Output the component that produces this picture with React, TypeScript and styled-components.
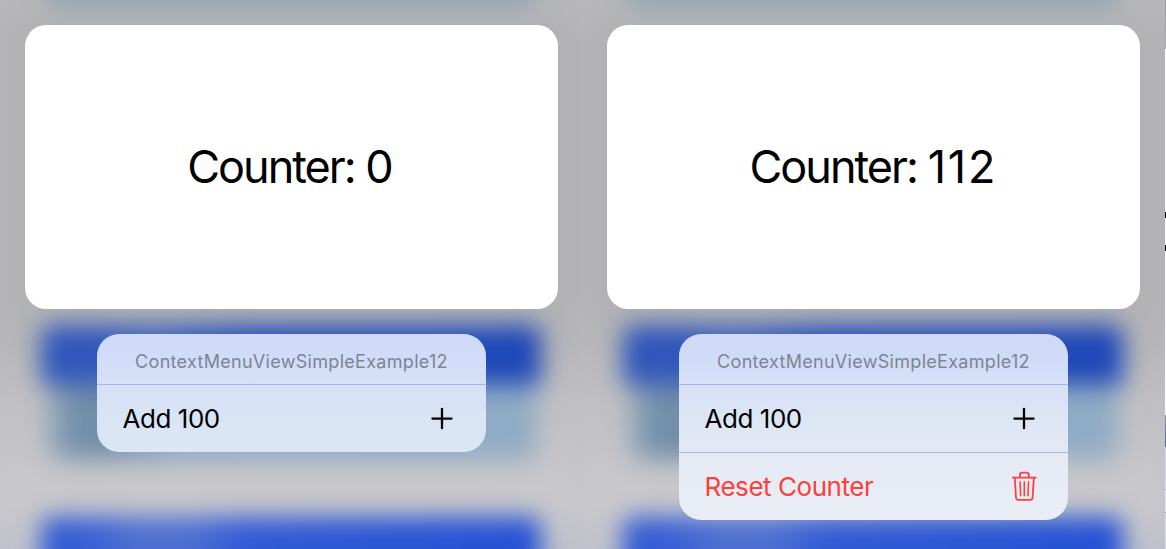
import React from "react";
import styled, { createGlobalStyle } from "styled-components";

const GlobalStyle = createGlobalStyle`
  * { box-sizing: border-box; }
  body { margin: 0; background: #b4b4b7; }
`;

const Screen = styled.main`
  display: grid;
  grid-template-columns: 582px 583px 1px;
  width: 1166px;
  height: 549px;
  overflow: hidden;
  font-family: Inter, "Liberation Sans", sans-serif;
  color: #000;
`;

const Panel = styled.section`
  position: relative;
  isolation: isolate;
  overflow: hidden;
  display: flex;
  flex-direction: column;
  align-items: flex-start;
  padding: 25px 0 0 25px;
  background: linear-gradient(90deg, rgba(184, 183, 188, 0.35) 0, rgba(174, 174, 176, 0.2) 25px, rgba(174, 174, 176, 0.2) 555px, rgba(182, 180, 188, 0.35) 100%),
    linear-gradient(#b9b9ba 0, #b2b2b4 40px, #b2b2b4 290px, #b6b7ba 340px, #c4c4c7 400px, #cecdd1 470px, #d0cfd3 505px, #c5c8d3 549px);
`;

const Backdrop = styled.div`
  position: absolute;
  inset: 0;
  z-index: -1;
`;

const Glow = styled.div<{ $x: number; $y: number; $w: number; $h: number; $fill: string; $blur: number }>`
  position: absolute;
  left: ${(p) => p.$x}px;
  top: ${(p) => p.$y}px;
  width: ${(p) => p.$w}px;
  height: ${(p) => p.$h}px;
  border-radius: 10px;
  background: ${(p) => p.$fill};
  filter: blur(${(p) => p.$blur}px);
`;

const Card = styled.div`
  display: flex;
  align-items: center;
  justify-content: center;
  width: 533px;
  height: 284px;
  border-radius: 21px;
  background: #fff;
`;

const CounterText = styled.span`
  padding-right: 2px;
  font-size: 45px;
  line-height: 54px;
  letter-spacing: -2px;
  white-space: pre;
`;

const Digits = styled.span`
  letter-spacing: 1.9px;
  margin-right: -1.9px;
`;

const Menu = styled.div<{ $tall?: boolean }>`
  width: 389px;
  margin: 25px 0 0 72px;
  border-radius: 22px;
  overflow: hidden;
  background: ${(p) =>
    p.$tall
      ? "linear-gradient(#cfdaf8 0, #d0dbf7 25px, #d8e1f6 54px, #dce6f4 85px, #e5eaf4 125px, #eaedf6 186px)"
      : "linear-gradient(#cfdaf8 0, #d1dcf8 25px, #d6e1f6 54px, #dce7f4 118px)"};
`;

const MenuTitle = styled.div`
  display: flex;
  align-items: center;
  justify-content: center;
  height: 50px;
  padding-top: 4px;
  font-size: 18px;
  letter-spacing: 0.3px;
  color: #7d8494;
`;

const MenuItem = styled.div<{ $danger?: boolean }>`
  display: flex;
  align-items: center;
  justify-content: space-between;
  height: 68px;
  padding: 0 31px 1px 25.5px;
  border-top: 1px solid ${(p) => (p.$danger ? "#afb8cd" : "#a4b5dd")};
  font-size: 26px;
  letter-spacing: ${(p) => (p.$danger ? -0.45 : -0.45)}px;
  color: ${(p) => (p.$danger ? "#ff4038" : "#000")};
`;

const Icon = styled.svg`
  display: block;
  width: 26px;
  height: 30px;
  fill: none;
  stroke: currentColor;
  stroke-linecap: round;
  stroke-linejoin: round;
`;

const NextPanel = styled.div`
  height: 549px;
  background: linear-gradient(
    #8e9aa8 0, #a9adb1 49px, #fff 49px, #fff 212px, #000 212px, #000 218px, #fff 218px,
    #fff 245px, #000 245px, #000 251px, #fff 251px, #fff 415px, #8e939f 415px,
    #4a66b8 447px, #cfd9f5 447px, #d4def6 489px, #a9b8da 489px, #a9b8da 490px,
    #dae4f4 490px, #dfe7f4 512px, #8f99b5 512px, #8f99b5 513px, #d5dcee 513px, #d3daef 549px
  );
`;

const PlusIcon = () => (
  <Icon viewBox="0 0 26 30" strokeWidth="2.3">
    <path d="M3.4 15.6h19.2M13 6v19.2" />
  </Icon>
);

const TrashIcon = () => (
  <Icon viewBox="0 0 26 30" strokeWidth="1.8">
    <path d="M1.8 6.6h23M8.8 6.6V4Q8.8 1.6 11.2 1.6h4.2Q17.8 1.6 17.8 4V6.6" />
    <path d="M3.7 6.6l1.3 19.9Q5.1 28.9 7.4 28.9h11.8q2.3 0 2.4-2.4L22.9 6.6" />
    <path strokeWidth="1.6" d="M9.1 10.9l.5 13.8M13.3 10.9v13.8M17.5 10.9l-.5 13.8" />
  </Icon>
);

interface ContextPanelProps {
  count: number;
  resettable?: boolean;
}

const ContextPanel = ({ count, resettable }: ContextPanelProps) => (
  <Panel>
    <Backdrop>
      <Glow $x={48} $y={-50} $w={486} $h={56} $fill="#8ca1b3" $blur={13} />
      <Glow $x={50} $y={366} $w={486} $h={93} $fill="linear-gradient(90deg, #86a0b8 0, #6f8ba7 35px, #7592ac 70px, #8ca8c2 130px, #8fabc5 100%)" $blur={13} />
      <Glow $x={41} $y={325} $w={500} $h={60} $fill="linear-gradient(90deg, #3056bb 0, #3056bb 60px, #3e60bb 110px, #224bb9 210px, #1e47b8 100%)" $blur={12} />
      <Glow $x={41} $y={517} $w={500} $h={90} $fill="linear-gradient(90deg, #305ad4 0, #3c62d4 60px, #4d6fd3 90px, #4d6fd3 150px, #325bd4 200px, #2552d4 100%)" $blur={12} />
    </Backdrop>
    <Card>
      <CounterText>
        {"Counter: "}
        <Digits>{count}</Digits>
      </CounterText>
    </Card>
    <Menu $tall={resettable}>
      <MenuTitle>ContextMenuViewSimpleExample12</MenuTitle>
      <MenuItem>
        Add 100
        <PlusIcon />
      </MenuItem>
      {resettable && (
        <MenuItem $danger>
          Reset Counter
          <TrashIcon />
        </MenuItem>
      )}
    </Menu>
  </Panel>
);

export default function App() {
  return (
    <>
      <GlobalStyle />
      <Screen>
        <ContextPanel count={0} />
        <ContextPanel count={112} resettable />
        <NextPanel />
      </Screen>
    </>
  );
}
